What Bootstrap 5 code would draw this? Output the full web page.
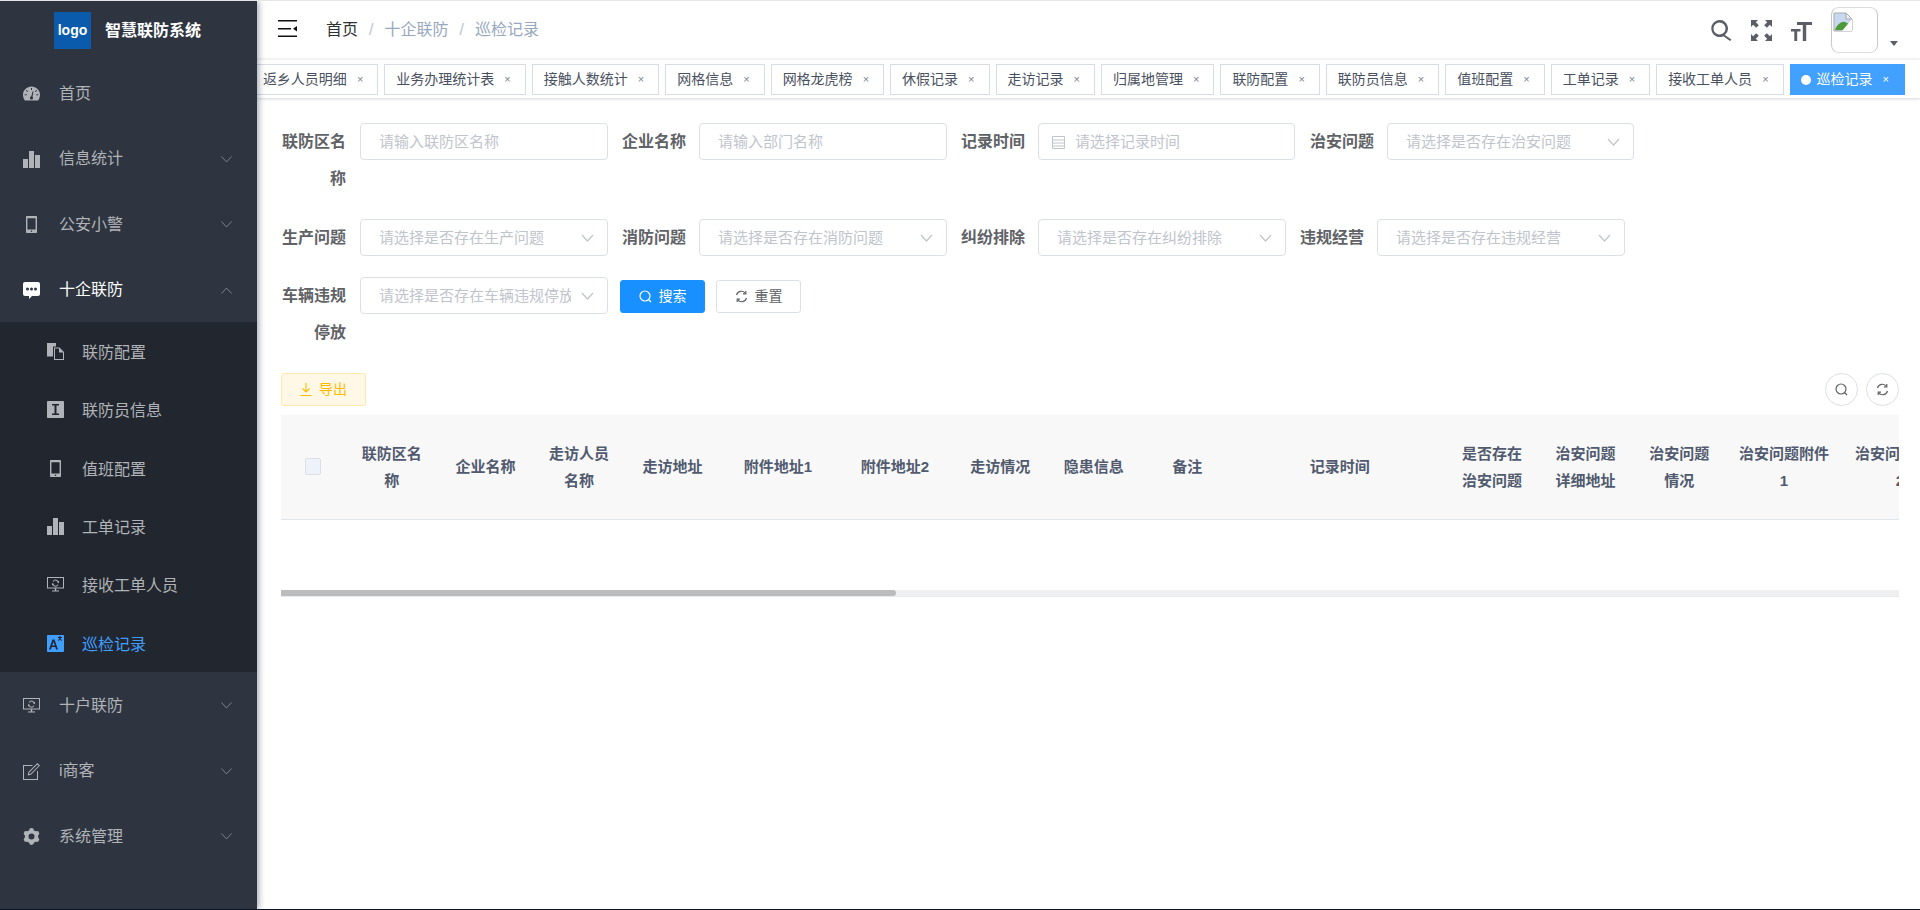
<!DOCTYPE html>
<html lang="zh-CN">
<head>
  <meta charset="UTF-8" />
  <meta name="viewport" content="width=device-width, initial-scale=1" />
  <title>智慧联防系统</title>
  <link href="https://cdn.jsdelivr.net/npm/bootstrap@5.3.0/dist/css/bootstrap.min.css" rel="stylesheet">
  <style>
    html, body { height: 100%; }
    body {
      font-family: "Liberation Sans", "Noto Sans CJK SC", sans-serif;
      overflow: hidden;
      background: #fff;
      border-top: 1px solid #e6e6e6;
      border-bottom: 1px solid #0b1626;
    }
    .app-wrap { height: 908px; }

    /* sidebar */
    .side-bar {
      width: 257px;
      background: #2e3540;
      box-shadow: 2px 0 6px rgba(0, 21, 41, .35);
      z-index: 2;
    }
    .side-logo { height: 59px; padding-left: 54px; gap: 14px; }
    .logo-box {
      width: 37px; height: 37px;
      background: #0a5bab; color: #fff;
      font-size: 14px; font-weight: 700;
    }
    .logo-title { color: #fff; font-size: 16px; font-weight: 700; }
    .side-item {
      height: 65.5px; padding: 2px 25px 0 23px;
      color: #b0b3b8; font-size: 16px;
    }
    .side-item svg.ic { width: 17px; height: 17px; margin-right: 19px; fill: #b0b3b8; flex-shrink: 0; }
    .side-item.is-open { color: #fff; }
    .side-item.is-open svg.ic { fill: #fff; }
    .side-sub { background: #22272f; }
    .side-subitem {
      height: 58.33px; padding: 4px 0 0 47px;
      color: #b0b3b8; font-size: 16px;
    }
    .side-subitem svg.ic { width: 17px; height: 17px; margin-right: 18px; margin-top: -3px; fill: #b0b3b8; flex-shrink: 0; }
    .side-subitem.is-current { color: #409eff; }
    .side-subitem.is-current svg.ic { fill: #409eff; }
    .side-arrow { width: 11px; height: 7px; stroke: #7c828a; fill: none; stroke-width: 1; }

    /* top bar */
    .main-col { min-width: 0; }
    .top-bar { height: 58px; padding-left: 21px; }
    .menu-toggle { margin-top: -3px; }
    .crumb-list { font-size: 16px; color: #97a8be; margin-left: 29px; }
    .crumb-list .crumb-home { color: #303133; }
    .crumb-sep { margin: 0 11px; color: #c0c4cc; }
    .top-tools { color: #5a5e66; padding-right: 22px; gap: 19px; }
    .top-tools svg.tool-ic { width: 21px; height: 21px; fill: #5a5e66; }
    .avatar-box {
      width: 47px; height: 46px; margin-left: 0;
      border: 1px solid #c8c8c8; border-radius: 8px;
      border-top-color: #ddd; border-bottom-color: #ddd;
      padding: 1px;
    }
    .avatar-caret {
      width: 0; height: 0; margin: 26px 0 0 -7px;
      border-left: 4px solid transparent; border-right: 4px solid transparent;
      border-top: 5px solid #5a5e66;
    }

    /* tags */
    .tags-bar {
      height: 39px; padding: 4px 15px 0 0;
      box-shadow: 0 1px 3px rgba(0, 21, 41, .16), 0 0 3px rgba(0, 0, 0, .04);
      border-top: 1px solid #f1f1f1;
      gap: 6px;
      overflow: hidden;
    }
    .tag-item {
      height: 31px; padding: 0 14px 0 11px;
      border: 1px solid #d8dce5;
      color: #495060; font-size: 14px;
      white-space: nowrap; flex-shrink: 0;
      background: #fff;
    }
    .tag-close { font-size: 11px; margin-left: 10px; color: #7c8290; line-height: 1; }
    .tag-item.is-active { background: #42a0ff; border-color: #42a0ff; color: #fff; padding: 0 15px 0 10px; }
    .tag-item.is-active .tag-close { color: #fff; }
    .tag-dot { width: 10px; height: 10px; border-radius: 50%; background: #fff; margin-right: 6px; }

    /* search form */
    .page-body { padding: 25px 21px 0 24px; }
    .query-row { margin-bottom: 22px; }
    .query-row.row-single { margin-bottom: 21px; }
    .q-label {
      font-size: 16px; font-weight: 700; line-height: 37px; color: #606266;
      text-align: right; padding-right: 13px; flex-shrink: 0; width: 79px;
    }
    .q-label.label-first { padding-right: 14px; }
    .q-field { position: relative; margin-right: 12px; flex-shrink: 0; width: 248px; }
    .q-field.field-date { width: 257px; margin-right: 13px; }
    .q-field.field-last { width: 247px; }
    .q-input.form-control {
      height: 37px; font-size: 15px; padding: 0 36px 0 18px;
      border: 1px solid #dcdfe6; border-radius: 4px; color: #606266;
      box-shadow: none;
    }
    .q-input::placeholder { color: #c0c4cc; opacity: 1; }
    .q-input.input-date { padding-left: 36px; }
    .q-chev { position: absolute; right: 14px; top: 15px; width: 13px; height: 8px; stroke: #c0c4cc; fill: none; stroke-width: 1.2; }
    .q-cal { position: absolute; left: 14px; top: 12px; width: 13px; height: 14px; stroke: #c0c4cc; fill: none; stroke-width: 1; }
    .btn.act-btn {
      height: 33px; font-size: 14px; padding: 0; margin-top: 3px;
      border-radius: 3px; gap: 7px;
      display: inline-flex; align-items: center; justify-content: center;
    }
    .btn.btn-find { width: 85px; background: #1890ff; border: 1px solid #1890ff; color: #fff; margin-right: 11px; }
    .btn.btn-clear { width: 85px; background: #fff; border: 1px solid #dcdfe6; color: #606266; }
    .btn-find svg, .btn-clear svg, .circle-btn svg { width: 13px; height: 13px; fill: none; stroke-width: 1.2; }
    .btn-find svg { stroke: #fff; }
    .btn-clear svg { stroke: #606266; }

    /* toolbar */
    .tool-row { margin-bottom: 9px; height: 33px; }
    .btn.btn-export {
      width: 85px; height: 33px; padding: 0; font-size: 14px;
      background: #fff8e6; border: 1px solid #ffe8aa; color: #ffba00; border-radius: 3px;
      display: inline-flex; align-items: center; justify-content: center; gap: 7px;
    }
    .btn-export svg { width: 12px; height: 13px; stroke: #ffba00; fill: none; stroke-width: 1.1; }
    .circle-btn {
      width: 33px; height: 33px; border-radius: 50%;
      border: 1px solid #dcdfe6; background: #fff; padding: 0;
      display: inline-flex; align-items: center; justify-content: center;
    }
    .circle-btn svg { stroke: #606266; }

    /* table */
    .grid-wrap { overflow: hidden; }
    .grid-table { width: 1677px; table-layout: fixed; margin-bottom: 0; }
    .grid-table th {
      width: 93.6px; height: 104px; padding: 0 10px;
      background: #f8f8f9; color: #515a6e;
      font-size: 15px; font-weight: 700; line-height: 27px;
      text-align: center; vertical-align: middle;
      border-bottom: 1px solid #dfe6ec;
    }
    .grid-table th.col-check { width: 64px; }
    .grid-table th.col-file { width: 117px; }
    .grid-table th.col-time { width: 211px; }
    .grid-table th.col-file2 { width: 116px; }
    .check-box { width: 16px; height: 17px; background: #eef3fb; border: 1px solid #dcdfe6; border-radius: 2px; display: block; margin: 0 auto; }
    .grid-empty { height: 70px; }
    .grid-scroll { height: 7px; background: #f0f0f0; border-bottom: 1px solid #e6e9f0; }
    .grid-thumb { width: 38%; height: 6px; background: #bcbcbc; border-radius: 0 3px 3px 0; }
  </style>
</head>

<body>
  <!-- shared icons -->
  <svg width="0" height="0" class="position-absolute">
    <symbol id="i-gauge" viewBox="0 0 17 14"><path fill-rule="evenodd" d="M8.5 0C3.8 0 0 3.7 0 8.3c0 1.9.6 3.9 1.6 5.3l.3.4h13.2l.3-.4c1-1.4 1.6-3.4 1.6-5.3C17 3.7 13.2 0 8.5 0zM8 1.6h1v2H8zM3.6 3.4l1.4 1.4-.7.7-1.4-1.4zm9.8 0l.7.7-1.4 1.4-.7-.7zM1.7 7.8h2v1h-2zm11.6 0h2v1h-2zM9.6 4.8l.9.3-1 5.2c.3.3.5.7.5 1.1 0 .9-.7 1.6-1.5 1.6S7 12.3 7 11.4c0-.8.6-1.5 1.4-1.6z"/></symbol>
    <symbol id="i-bars" viewBox="0 0 17 17"><path d="M0 8h5v9H0zM6 0h5v17H6zM12 4h5v13h-5z"/></symbol>
    <symbol id="i-phone" viewBox="0 0 17 17"><path fill-rule="evenodd" d="M4 0h9c.6 0 1 .4 1 1v15c0 .6-.4 1-1 1H4c-.6 0-1-.4-1-1V1c0-.6.4-1 1-1zm.4 2.2v11.4h8.2V2.200zM8.500 14.400a.8.8 0 100 1.600.8.800 0 000-1.600z"/></symbol>
    <symbol id="i-chat" viewBox="0 0 17 17"><path fill-rule="evenodd" d="M2 0h13c1.100 0 2 .9 2 2v10c0 1.100-.9 2-2 2H9l-3 3v-3H2c-1.100 0-2-.9-2-2V2C0 .9.900 0 2 0zm2.500 5.500a1.500 1.500 0 100 3 1.500 1.500 0 000-3zm4 0a1.500 1.500 0 100 3 1.500 1.500 0 000-3zm4 0a1.500 1.500 0 100 3 1.500 1.500 0 000-3z"/></symbol>
    <symbol id="i-copy" viewBox="0 0 17 17"><path fill-rule="evenodd" d="M0 0h9v3.500H6v10H0zM7 4.500h5.500L17 9v8H7zm5 1v4h4v6.500H8V5.500z"/></symbol>
    <symbol id="i-ibox" viewBox="0 0 17 17"><path fill-rule="evenodd" d="M1 0h15c.6 0 1 .4 1 1v15c0 .6-.4 1-1 1H1c-.6 0-1-.4-1-1V1c0-.6.400-1 1-1zm4 3v1.500h2.500v8H5V14h7v-1.500H9.500v-8H12V3z"/></symbol>
    <symbol id="i-screen" viewBox="0 0 17 17"><path fill-rule="evenodd" d="M0 1h17v11.500H9.200v2H12v1H5v-1h2.800v-2H0zm1 1v9.500h15V2zM8.500 3.500a3 3 0 012.700 1.700l.8-.4v2.400l-2-1 .5-.3a2.200 2.200 0 00-4-.2l-.8-.3a3 3 0 012.800-1.900zM5 7l2 1-.5.300a2.200 2.200 0 004 .2l.8.3a3 3 0 01-5.500.2l-.800.4z"/></symbol>
    <symbol id="i-lang" viewBox="0 0 17 17"><path fill-rule="evenodd" d="M1 0h15c.6 0 1 .4 1 1v15c0 .6-.4 1-1 1H1c-.6 0-1-.4-1-1V1c0-.6.400-1 1-1zm4.500 4.500L2 14.500h1.900l.8-2.400h3.600l.8 2.400h1.900L7.500 4.500zm1 2.300l1.300 3.800H5.200zM11 2v1h1.400c-.2.800-.7 1.600-1.500 2.200l.5.700c.6-.4 1.100-.9 1.500-1.500.4.600.9 1.100 1.500 1.500l.5-.7c-.700-.6-1.200-1.400-1.500-2.200H15V2h-1.600V1h-1v1z"/></symbol>
    <symbol id="i-edit" viewBox="0 0 17 17"><path fill-rule="evenodd" d="M0 2h9.500v1H1v13h13V8h1v9H0zM14.300 0L17 2.600 8 11.700l-3.300.8.700-3.400zm0 1.500L6.300 9.500l-.4 1.700 1.700-.4 8-8z"/></symbol>
    <symbol id="i-gear" viewBox="0 0 17 17">
      <circle cx="8.500" cy="8.500" r="4.800" fill="none" stroke="#b0b3b8" stroke-width="3.600"/>
      <circle cx="8.500" cy="2.400" r="2.400"/><circle cx="8.500" cy="14.600" r="2.400"/>
      <circle cx="3.200" cy="5.400" r="2.400"/><circle cx="13.800" cy="5.400" r="2.400"/>
      <circle cx="3.200" cy="11.600" r="2.400"/><circle cx="13.800" cy="11.600" r="2.400"/>
    </symbol>
    <symbol id="i-down" viewBox="0 0 11 7"><path d="M.5.500l5 5.500 5-5.500"/></symbol>
    <symbol id="i-up" viewBox="0 0 11 7"><path d="M.5 6.500L5.500 1l5 5.500"/></symbol>
    <symbol id="i-search" viewBox="0 0 13 13"><circle cx="6" cy="6" r="5"/><path d="M9.500 9.500l2.500 2.500"/></symbol>
    <symbol id="i-refresh" viewBox="0 0 13 13"><path d="M1.500 5a5 5 0 019-1.500M11.500 8a5 5 0 01-9 1.500"/><path d="M10.800 1v2.800H8M2.200 12V9.200H5"/></symbol>
  </svg>

  <div class="app-wrap d-flex">
    <aside class="side-bar d-flex flex-column flex-shrink-0">
      <div class="side-logo d-flex align-items-center">
        <div class="logo-box d-flex align-items-center justify-content-center">logo</div>
        <span class="logo-title">智慧联防系统</span>
      </div>
      <ul class="list-unstyled mb-0">
        <li class="side-item d-flex align-items-center"><svg class="ic"><use href="#i-gauge"/></svg>首页</li>
        <li class="side-item d-flex align-items-center"><svg class="ic"><use href="#i-bars"/></svg><span class="flex-grow-1">信息统计</span><svg class="side-arrow"><use href="#i-down"/></svg></li>
        <li class="side-item d-flex align-items-center"><svg class="ic"><use href="#i-phone"/></svg><span class="flex-grow-1">公安小警</span><svg class="side-arrow"><use href="#i-down"/></svg></li>
        <li class="side-item is-open d-flex align-items-center"><svg class="ic"><use href="#i-chat"/></svg><span class="flex-grow-1">十企联防</span><svg class="side-arrow"><use href="#i-up"/></svg></li>
        <li>
          <ul class="side-sub list-unstyled mb-0">
            <li class="side-subitem d-flex align-items-center"><svg class="ic"><use href="#i-copy"/></svg>联防配置</li>
            <li class="side-subitem d-flex align-items-center"><svg class="ic"><use href="#i-ibox"/></svg>联防员信息</li>
            <li class="side-subitem d-flex align-items-center"><svg class="ic"><use href="#i-phone"/></svg>值班配置</li>
            <li class="side-subitem d-flex align-items-center"><svg class="ic"><use href="#i-bars"/></svg>工单记录</li>
            <li class="side-subitem d-flex align-items-center"><svg class="ic"><use href="#i-screen"/></svg>接收工单人员</li>
            <li class="side-subitem is-current d-flex align-items-center"><svg class="ic"><use href="#i-lang"/></svg>巡检记录</li>
          </ul>
        </li>
        <li class="side-item d-flex align-items-center"><svg class="ic"><use href="#i-screen"/></svg><span class="flex-grow-1">十户联防</span><svg class="side-arrow"><use href="#i-down"/></svg></li>
        <li class="side-item d-flex align-items-center"><svg class="ic"><use href="#i-edit"/></svg><span class="flex-grow-1">i商客</span><svg class="side-arrow"><use href="#i-down"/></svg></li>
        <li class="side-item d-flex align-items-center"><svg class="ic"><use href="#i-gear"/></svg><span class="flex-grow-1">系统管理</span><svg class="side-arrow"><use href="#i-down"/></svg></li>
      </ul>
    </aside>

    <div class="main-col flex-grow-1 d-flex flex-column">
      <header class="top-bar d-flex align-items-center">
        <svg class="menu-toggle" width="19" height="17" viewBox="0 0 19 17"><path d="M0 0h19v1.600H0zM0 8h13v1.600H0zM0 15.400h19V17H0z" fill="#111"/><path d="M19 6v5.500l-4-2.700z" fill="#111"/></svg>
        <div class="crumb-list d-flex">
          <span class="crumb-home">首页</span><span class="crumb-sep">/</span><span>十企联防</span><span class="crumb-sep">/</span><span>巡检记录</span>
        </div>
        <div class="top-tools ms-auto d-flex align-items-center">
          <svg class="tool-ic" viewBox="0 0 21 21"><path fill-rule="evenodd" d="M8.500 0a8.500 8.500 0 015.400 15l6.500 4.500-1.300 1.500-6.700-4.800A8.500 8.500 0 118.500 0zm0 2.500a6 6 0 100 12 6 6 0 000-12z"/></svg>
          <svg class="tool-ic" viewBox="0 0 21 21"><path d="M0 0h7L4.800 2.200l3 3-2.600 2.600-3-3L0 7zM21 0v7l-2.200-2.200-3 3-2.600-2.600 3-3L14 0zM0 21v-7l2.200 2.200 3-3 2.600 2.600-3 3L7 21zM21 21h-7l2.200-2.200-3-3 2.600-2.600 3 3L21 14z"/></svg>
          <svg class="tool-ic" viewBox="0 0 21 21"><path d="M6 2h15v3h-5.800v16h-3.400V5H6zM0 9h9.500v2.600H6.200V21H3.300v-9.400H0z"/></svg>
          <div class="d-flex align-items-start">
            <div class="avatar-box">
              <svg width="20" height="20" viewBox="0 0 20 20">
                <path d="M1 1h12l6 6v12H1z" fill="#c8d8f0" stroke="#a8a8a8"/>
                <path d="M2 18c2-6 7-9 10-8l6 3v5z" fill="#4e9a3a"/>
                <path d="M13 1v6h6z" fill="#eef" stroke="#a8a8a8"/>
                <path d="M19 7L9 19h10z" fill="#fff"/>
              </svg>
            </div>
          </div>
          <div class="avatar-caret"></div>
        </div>
      </header>

      <div class="tags-bar d-flex justify-content-end">
        <div class="tag-item d-flex align-items-center">返乡人员明细<span class="tag-close">×</span></div>
        <div class="tag-item d-flex align-items-center">业务办理统计表<span class="tag-close">×</span></div>
        <div class="tag-item d-flex align-items-center">接触人数统计<span class="tag-close">×</span></div>
        <div class="tag-item d-flex align-items-center">网格信息<span class="tag-close">×</span></div>
        <div class="tag-item d-flex align-items-center">网格龙虎榜<span class="tag-close">×</span></div>
        <div class="tag-item d-flex align-items-center">休假记录<span class="tag-close">×</span></div>
        <div class="tag-item d-flex align-items-center">走访记录<span class="tag-close">×</span></div>
        <div class="tag-item d-flex align-items-center">归属地管理<span class="tag-close">×</span></div>
        <div class="tag-item d-flex align-items-center">联防配置<span class="tag-close">×</span></div>
        <div class="tag-item d-flex align-items-center">联防员信息<span class="tag-close">×</span></div>
        <div class="tag-item d-flex align-items-center">值班配置<span class="tag-close">×</span></div>
        <div class="tag-item d-flex align-items-center">工单记录<span class="tag-close">×</span></div>
        <div class="tag-item d-flex align-items-center">接收工单人员<span class="tag-close">×</span></div>
        <div class="tag-item is-active d-flex align-items-center"><span class="tag-dot"></span>巡检记录<span class="tag-close">×</span></div>
      </div>

      <main class="page-body flex-grow-1">
        <form>
          <div class="query-row d-flex align-items-start">
            <label class="q-label label-first">联防区名称</label>
            <div class="q-field"><input class="q-input form-control" placeholder="请输入联防区名称"></div>
            <label class="q-label">企业名称</label>
            <div class="q-field"><input class="q-input form-control" placeholder="请输入部门名称"></div>
            <label class="q-label">记录时间</label>
            <div class="q-field field-date">
              <input class="q-input input-date form-control" placeholder="请选择记录时间">
              <svg class="q-cal" viewBox="0 0 13 14"><path d="M.5 1.500h12v12H.5zM.5 5h12M.5 8h12M.5 11h12"/></svg>
            </div>
            <label class="q-label">治安问题</label>
            <div class="q-field field-last"><input class="q-input form-control" placeholder="请选择是否存在治安问题"><svg class="q-chev" viewBox="0 0 13 8"><path d="M1 1l5.500 6L12 1"/></svg></div>
          </div>

          <div class="query-row row-single d-flex align-items-start">
            <label class="q-label label-first">生产问题</label>
            <div class="q-field"><input class="q-input form-control" placeholder="请选择是否存在生产问题"><svg class="q-chev" viewBox="0 0 13 8"><path d="M1 1l5.500 6L12 1"/></svg></div>
            <label class="q-label">消防问题</label>
            <div class="q-field"><input class="q-input form-control" placeholder="请选择是否存在消防问题"><svg class="q-chev" viewBox="0 0 13 8"><path d="M1 1l5.500 6L12 1"/></svg></div>
            <label class="q-label">纠纷排除</label>
            <div class="q-field"><input class="q-input form-control" placeholder="请选择是否存在纠纷排除"><svg class="q-chev" viewBox="0 0 13 8"><path d="M1 1l5.500 6L12 1"/></svg></div>
            <label class="q-label">违规经营</label>
            <div class="q-field"><input class="q-input form-control" placeholder="请选择是否存在违规经营"><svg class="q-chev" viewBox="0 0 13 8"><path d="M1 1l5.500 6L12 1"/></svg></div>
          </div>

          <div class="query-row d-flex align-items-start">
            <label class="q-label label-first">车辆违规停放</label>
            <div class="q-field"><input class="q-input form-control" placeholder="请选择是否存在车辆违规停放"><svg class="q-chev" viewBox="0 0 13 8"><path d="M1 1l5.500 6L12 1"/></svg></div>
            <button type="button" class="btn act-btn btn-find"><svg><use href="#i-search"/></svg>搜索</button>
            <button type="button" class="btn act-btn btn-clear"><svg><use href="#i-refresh"/></svg>重置</button>
          </div>
        </form>

        <div class="tool-row d-flex justify-content-between">
          <button type="button" class="btn btn-export">
            <svg viewBox="0 0 12 13"><path d="M6 0v9M2.500 5.500L6 9l3.500-3.500M.5 12.500h11"/></svg>导出
          </button>
          <div class="d-flex gap-2">
            <button type="button" class="circle-btn"><svg><use href="#i-search"/></svg></button>
            <button type="button" class="circle-btn"><svg><use href="#i-refresh"/></svg></button>
          </div>
        </div>

        <div class="grid-wrap">
          <table class="grid-table table">
            <thead>
              <tr>
                <th class="col-check"><span class="check-box"></span></th>
                <th>联防区名称</th>
                <th>企业名称</th>
                <th>走访人员名称</th>
                <th>走访地址</th>
                <th class="col-file">附件地址1</th>
                <th class="col-file">附件地址2</th>
                <th>走访情况</th>
                <th>隐患信息</th>
                <th>备注</th>
                <th class="col-time">记录时间</th>
                <th>是否存在治安问题</th>
                <th>治安问题详细地址</th>
                <th>治安问题情况</th>
                <th class="col-file2">治安问题附件1</th>
                <th class="col-file2">治安问题附件2</th>
              </tr>
            </thead>
          </table>
          <div class="grid-empty"></div>
          <div class="grid-scroll"><div class="grid-thumb"></div></div>
        </div>
      </main>
    </div>
  </div>

  <script src="https://cdn.jsdelivr.net/npm/bootstrap@5.3.0/dist/js/bootstrap.bundle.min.js"></script>
</body>
</html>
